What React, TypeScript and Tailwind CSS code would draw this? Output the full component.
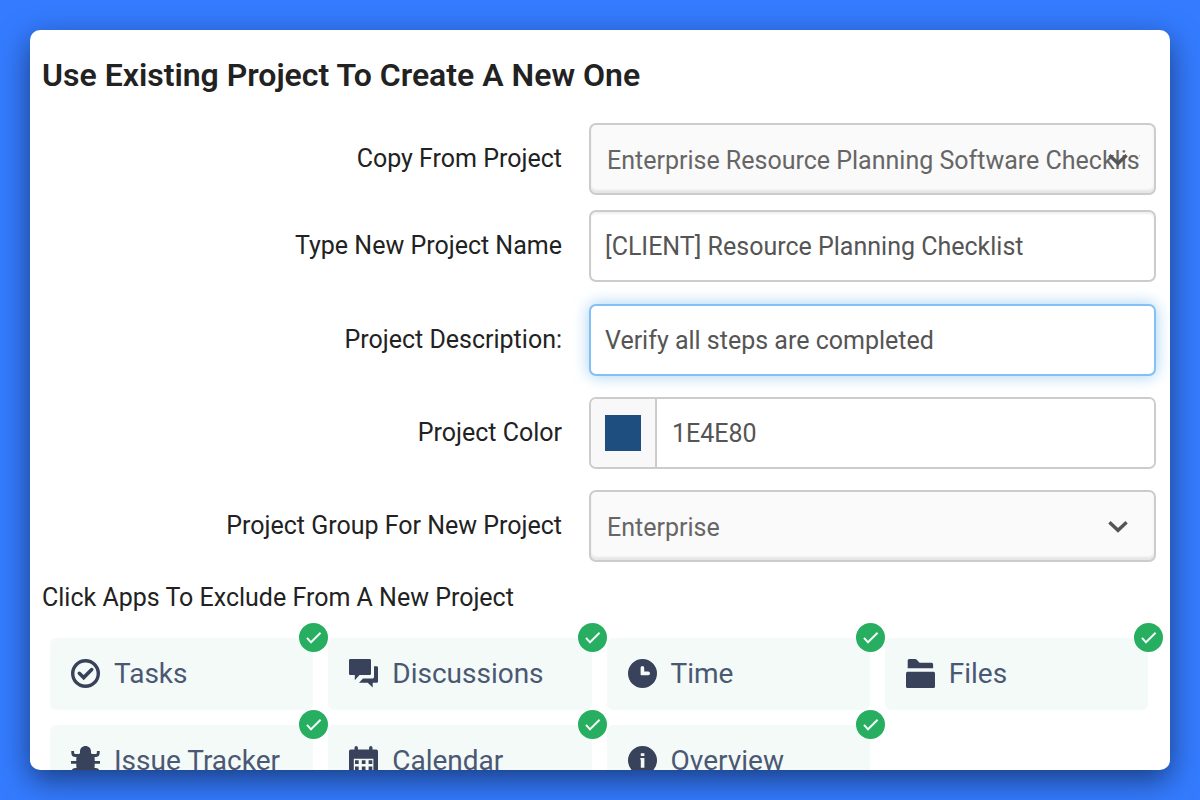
import type { ReactNode } from "react";

const fieldBox =
  "h-[72px] w-full rounded-[7px] border-2 border-[#cccccc] text-[25px] leading-[30px] outline-none";

function Row({ id, label, children }: { id: string; label: string; children: ReactNode }) {
  return (
    <div className="grid grid-cols-[minmax(0,520fr)_minmax(0,567fr)] items-center gap-x-[27px]">
      <label htmlFor={id} className="text-right text-[25px] leading-[30px] text-[#222222]">
        {label}
      </label>
      {children}
    </div>
  );
}

function SelectField({ id, options }: { id: string; options: string[] }) {
  return (
    <div className="relative">
      <select
        id={id}
        className={`${fieldBox} block appearance-none bg-[#fafafa] pl-4 pr-[14px] pt-1 text-[#666666] shadow-[inset_0_-3px_2px_#e6e6e6]`}
      >
        {options.map((o) => (
          <option key={o}>{o}</option>
        ))}
      </select>
      <svg
        viewBox="0 0 20 14"
        className="pointer-events-none absolute right-7 top-[30px] h-[14px] w-5"
        fill="none"
        stroke="#555555"
        strokeWidth="3.4"
      >
        <path d="M1.4 2.2 10 10.3 18.6 2.2" />
      </svg>
    </div>
  );
}

function TasksIcon() {
  return (
    <>
      <circle cx="14.5" cy="14.5" r="12.8" fill="none" stroke="currentColor" strokeWidth="3.4" />
      <path d="m8.3 14.3 4.4 4.3 8-8" fill="none" stroke="currentColor" strokeWidth="3.6" strokeLinecap="round" />
    </>
  );
}

function DiscussionsIcon() {
  return (
    <>
      <path d="M1.3 0h19.4Q22 0 22 1.3v13.4q0 1.3-1.3 1.3h-10.2L5.8 21.2V16H1.3Q0 16 0 14.7V1.3Q0 0 1.3 0z" />
      <path d="M25 7.2h2.7q1.3 0 1.3 1.3v14q0 1.3-1.3 1.3h-4v4.7l-5-4.7H10l4-4.4h9.7q1.3 0 1.3-1.3z" />
    </>
  );
}

function TimeIcon() {
  return (
    <path
      fillRule="evenodd"
      d="M14.5 0a14.5 14.5 0 1 0 0 29 14.5 14.5 0 0 0 0-29zM14.4 7q1.8 0 1.8 1.8v3.8h4q1.8 0 1.8 1.8t-1.8 1.8h-6.8q-.8 0-.8-.8V8.8Q12.600 7 14.400 7z"
    />
  );
}

function FilesIcon() {
  return (
    <>
      <path d="M3.300 0H9q1.200 0 2 .9l2.600 2.900h12q1.500 0 1.500 1.500v4H1.700V1.500Q1.700 0 3.300 0z" />
      <rect x="0" y="12.700" width="29" height="16.300" rx="1.500" />
    </>
  );
}

function BugIcon() {
  return (
    <>
      <path d="M9 7V5.500C9 2.300 11.300 0 14.500 0S20 2.300 20 5.500V7l3.700 4.500V20c0 5-4 9-9.200 9s-9.200-4-9.200-9v-8.500z" />
      <path
        d="M1.700 5v1.700q0 2.800 2.800 2.800H9M27.300 5v1.700q0 2.800-2.800 2.800H20M0 16.400h29M1.700 27.500v-1.300q0-2.800 2.800-2.800h20q2.800 0 2.800 2.800v1.300"
        fill="none"
        stroke="currentColor"
        strokeWidth="2.800"
      />
    </>
  );
}

function CalendarIcon() {
  return (
    <path
      fillRule="evenodd"
      d="M7.200 0q1.700 0 1.700 1.700v1.800h11.200V1.700Q20.100 0 21.800 0t1.700 1.700v1.800h3.700Q29 3.500 29 5.300v21.900q0 1.800-1.800 1.800H1.800Q0 29 0 27.200V5.300Q0 3.500 1.800 3.500h3.700V1.700Q5.500 0 7.200 0zM4.800 12.700v13.500h19.600V12.700zM6 14.200h3.700v3.700H6zm6.800 0h3.700v3.700h-3.700zm6.800 0h3.700v3.700h-3.700zM6 20.500h3.700v3.700H6zm6.800 0h3.700v3.700h-3.700zm6.800 0h3.700v3.700h-3.700z"
    />
  );
}

function InfoIcon() {
  return (
    <path
      fillRule="evenodd"
      d="M14.500 0a14.500 14.500 0 1 0 0 29 14.500 14.500 0 0 0 0-29zM12.800 7.200h3.600v2.800h-3.600zM12.300 12h4.100v9.800h-3.600v-8.200h-.5z"
    />
  );
}

const apps: { name: string; icon: ReactNode }[] = [
  { name: "Tasks", icon: <TasksIcon /> },
  { name: "Discussions", icon: <DiscussionsIcon /> },
  { name: "Time", icon: <TimeIcon /> },
  { name: "Files", icon: <FilesIcon /> },
  { name: "Issue Tracker", icon: <BugIcon /> },
  { name: "Calendar", icon: <CalendarIcon /> },
  { name: "Overview", icon: <InfoIcon /> },
];

function AppTile({ name, icon }: { name: string; icon: ReactNode }) {
  return (
    <button
      type="button"
      aria-pressed="true"
      className="relative flex h-[72px] items-center gap-[14px] rounded-[6px] bg-[#f4faf8] pb-[2px] pl-[21px] text-left text-[28px] leading-8 text-[#4a5873]"
    >
      <svg viewBox="0 0 29 29" className="h-[29px] w-[29px] shrink-0 text-[#38435b]" fill="currentColor">
        {icon}
      </svg>
      <span className="pt-[2px]">{name}</span>
      <span className="absolute -right-[15px] -top-[15px] flex h-[29px] w-[29px] items-center justify-center rounded-full bg-[#27ae60]">
        <svg viewBox="0 0 29 29" className="h-[29px] w-[29px]" fill="none" stroke="#f4faf8" strokeWidth="2">
          <path d="m8 14.800 4 4.500L21.600 9.800" />
        </svg>
      </span>
    </button>
  );
}

export default function App() {
  return (
    <div className="flex h-screen flex-col bg-[#347bff] p-[30px] font-['Roboto',sans-serif]">
      <main className="min-h-0 flex-1 overflow-hidden rounded-[10px] bg-white shadow-[0_10px_30px_rgba(0,0,0,0.5)]">
        <h1 className="px-3 pt-[26px] text-[32px] font-semibold leading-[38px] text-[#222222]">
          Use Existing Project To Create A New One
        </h1>
        <form className="pl-3 pr-[14px] pt-[29px]">
          <div className="flex flex-col gap-[22px]">
            <div className="flex flex-col gap-[15px]">
              <Row id="source" label="Copy From Project">
                <SelectField id="source" options={["Enterprise Resource Planning Software Checklist"]} />
              </Row>
              <Row id="name" label="Type New Project Name">
                <input
                  id="name"
                  type="text"
                  defaultValue="[CLIENT] Resource Planning Checklist"
                  className={`${fieldBox} bg-white px-[14px] text-[#555555] shadow-[inset_0_2px_2px_#f0f0f0]`}
                />
              </Row>
            </div>
            <div className="flex flex-col gap-[21px]">
              <Row id="description" label="Project Description:">
                <input
                  id="description"
                  type="text"
                  defaultValue="Verify all steps are completed"
                  className="h-[72px] w-full rounded-[7px] border-2 border-[#83c0f5] bg-white px-[14px] text-[25px] leading-[30px] text-[#555555] shadow-[0_0_16px_rgba(102,175,233,0.6)] outline-none"
                />
              </Row>
              <Row id="color" label="Project Color">
                <div className="flex h-[72px] overflow-hidden rounded-[7px] border-2 border-[#cccccc]">
                  <button
                    type="button"
                    aria-label="Pick color"
                    className="flex w-[66px] shrink-0 items-center justify-center border-r-2 border-[#cccccc] bg-[#f8f8f8]"
                  >
                    <span className="h-9 w-9 bg-[#1e4e80]" />
                  </button>
                  <input
                    id="color"
                    type="text"
                    defaultValue="1E4E80"
                    className="min-w-0 flex-1 bg-white px-[15px] pt-[2px] text-[25px] leading-[30px] text-[#555555] outline-none"
                  />
                </div>
              </Row>
              <Row id="group" label="Project Group For New Project">
                <SelectField id="group" options={["Enterprise"]} />
              </Row>
            </div>
          </div>
          <h2 className="pt-[21px] text-[25px] leading-[30px] text-[#222222]">
            Click Apps To Exclude From A New Project
          </h2>
          <div className="grid grid-cols-4 gap-[15px] pl-2 pr-2 pt-[25px]">
            {apps.map((app) => (
              <AppTile key={app.name} name={app.name} icon={app.icon} />
            ))}
          </div>
        </form>
      </main>
    </div>
  );
}
